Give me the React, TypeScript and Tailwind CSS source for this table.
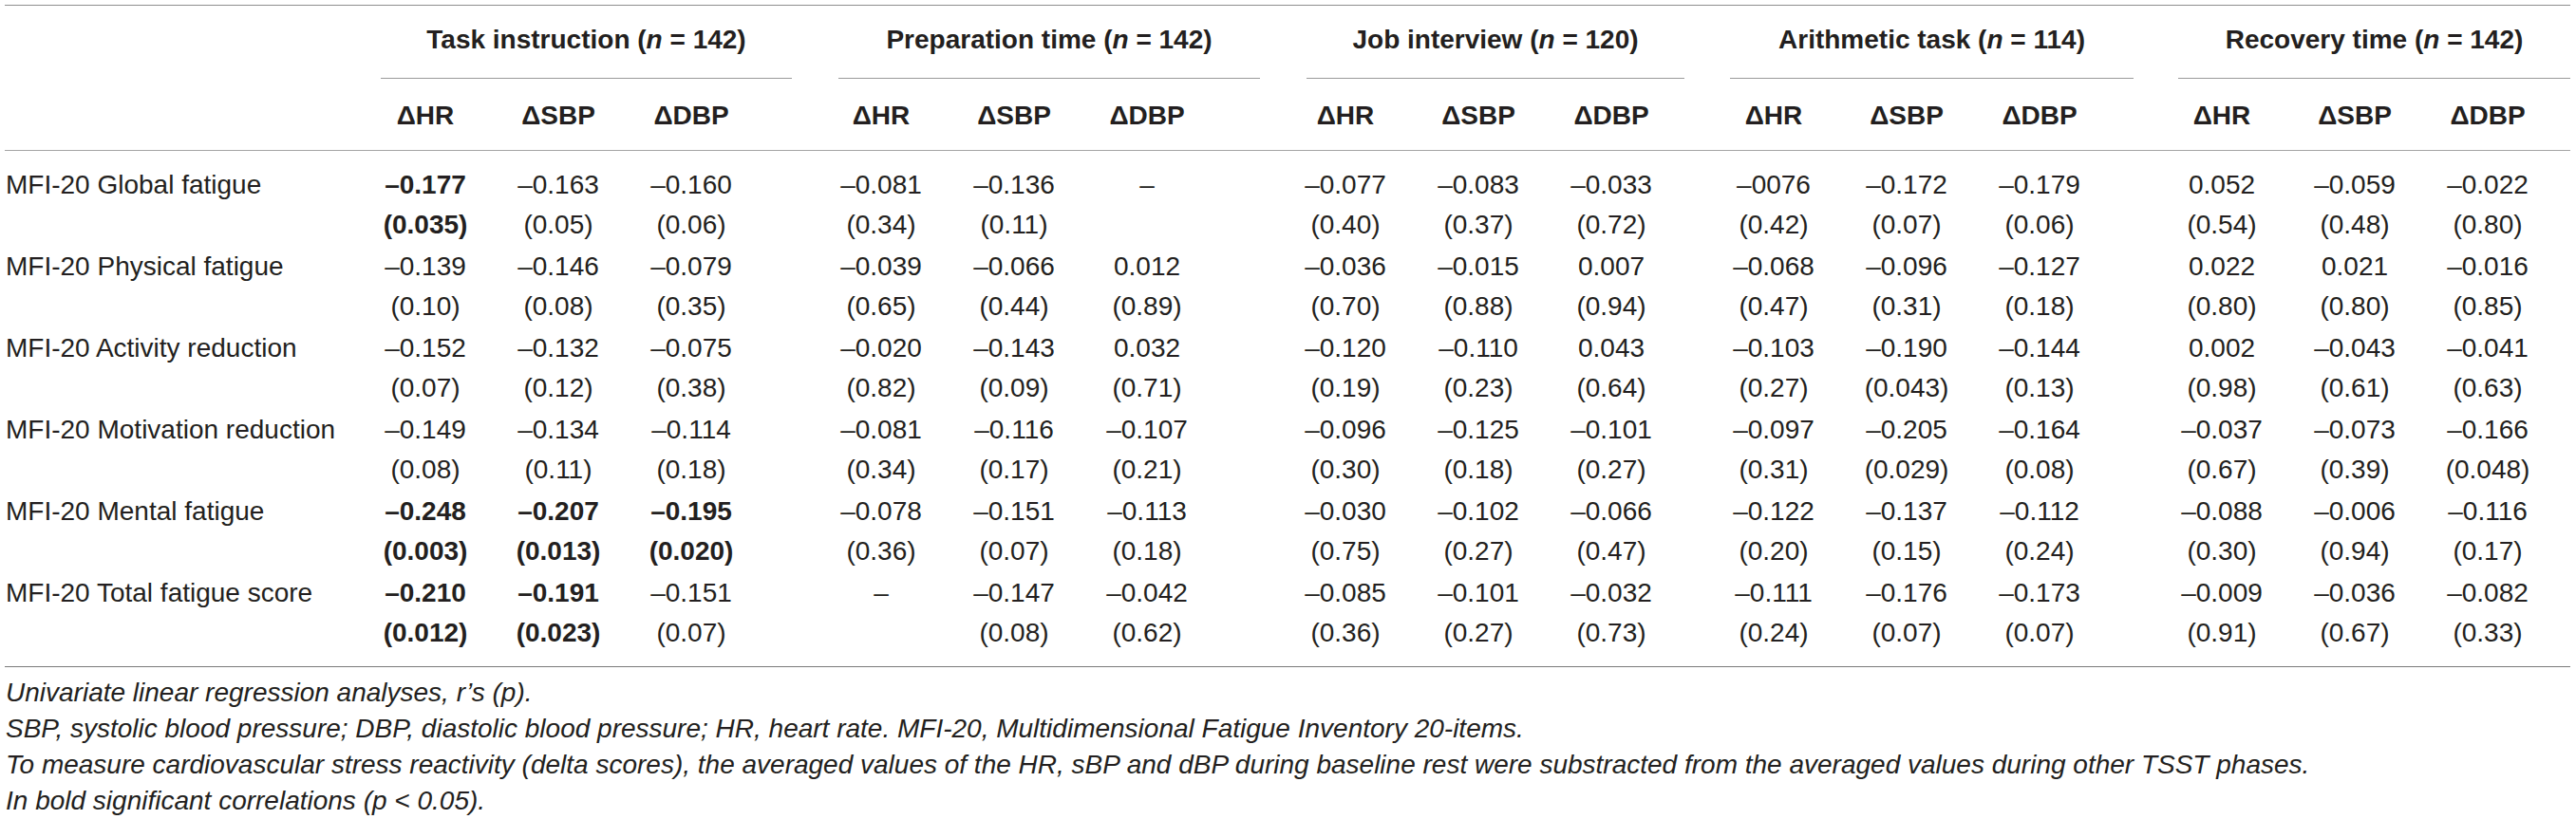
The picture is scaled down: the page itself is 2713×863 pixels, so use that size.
type Cell = { r: string; p?: string; b?: boolean };

const groups = [
  { title: "Task instruction", n: "142", line: "ml-[23px] mr-[24px]", gap: "w-[60px]" },
  { title: "Preparation time", n: "142", line: "ml-[25px] mr-[20px]", gap: "w-[69px]" },
  { title: "Job interview", n: "120", line: "ml-[29px] mr-[24px]", gap: "w-[31px]" },
  { title: "Arithmetic task", n: "114", line: "ml-[24px] mr-[23px]", gap: "w-[52px]" },
  { title: "Recovery time", n: "142", line: "ml-[24px] mr-0", gap: "w-[17px]" },
];

const subs = ["ΔHR", "ΔSBP", "ΔDBP"];

const c = (r: string, p?: string, b?: boolean): Cell => ({ r, p, b });

const rows: { label: string; cells: Cell[] }[] = [
  {
    label: "MFI-20 Global fatigue",
    cells: [
      c("–0.177", "(0.035)", true), c("–0.163", "(0.05)"), c("–0.160", "(0.06)"),
      c("–0.081", "(0.34)"), c("–0.136", "(0.11)"), c("–"),
      c("–0.077", "(0.40)"), c("–0.083", "(0.37)"), c("–0.033", "(0.72)"),
      c("–0076", "(0.42)"), c("–0.172", "(0.07)"), c("–0.179", "(0.06)"),
      c("0.052", "(0.54)"), c("–0.059", "(0.48)"), c("–0.022", "(0.80)"),
    ],
  },
  {
    label: "MFI-20 Physical fatigue",
    cells: [
      c("–0.139", "(0.10)"), c("–0.146", "(0.08)"), c("–0.079", "(0.35)"),
      c("–0.039", "(0.65)"), c("–0.066", "(0.44)"), c("0.012", "(0.89)"),
      c("–0.036", "(0.70)"), c("–0.015", "(0.88)"), c("0.007", "(0.94)"),
      c("–0.068", "(0.47)"), c("–0.096", "(0.31)"), c("–0.127", "(0.18)"),
      c("0.022", "(0.80)"), c("0.021", "(0.80)"), c("–0.016", "(0.85)"),
    ],
  },
  {
    label: "MFI-20 Activity reduction",
    cells: [
      c("–0.152", "(0.07)"), c("–0.132", "(0.12)"), c("–0.075", "(0.38)"),
      c("–0.020", "(0.82)"), c("–0.143", "(0.09)"), c("0.032", "(0.71)"),
      c("–0.120", "(0.19)"), c("–0.110", "(0.23)"), c("0.043", "(0.64)"),
      c("–0.103", "(0.27)"), c("–0.190", "(0.043)"), c("–0.144", "(0.13)"),
      c("0.002", "(0.98)"), c("–0.043", "(0.61)"), c("–0.041", "(0.63)"),
    ],
  },
  {
    label: "MFI-20 Motivation reduction",
    cells: [
      c("–0.149", "(0.08)"), c("–0.134", "(0.11)"), c("–0.114", "(0.18)"),
      c("–0.081", "(0.34)"), c("–0.116", "(0.17)"), c("–0.107", "(0.21)"),
      c("–0.096", "(0.30)"), c("–0.125", "(0.18)"), c("–0.101", "(0.27)"),
      c("–0.097", "(0.31)"), c("–0.205", "(0.029)"), c("–0.164", "(0.08)"),
      c("–0.037", "(0.67)"), c("–0.073", "(0.39)"), c("–0.166", "(0.048)"),
    ],
  },
  {
    label: "MFI-20 Mental fatigue",
    cells: [
      c("–0.248", "(0.003)", true), c("–0.207", "(0.013)", true), c("–0.195", "(0.020)", true),
      c("–0.078", "(0.36)"), c("–0.151", "(0.07)"), c("–0.113", "(0.18)"),
      c("–0.030", "(0.75)"), c("–0.102", "(0.27)"), c("–0.066", "(0.47)"),
      c("–0.122", "(0.20)"), c("–0.137", "(0.15)"), c("–0.112", "(0.24)"),
      c("–0.088", "(0.30)"), c("–0.006", "(0.94)"), c("–0.116", "(0.17)"),
    ],
  },
  {
    label: "MFI-20 Total fatigue score",
    cells: [
      c("–0.210", "(0.012)", true), c("–0.191", "(0.023)", true), c("–0.151", "(0.07)"),
      c("–"), c("–0.147", "(0.08)"), c("–0.042", "(0.62)"),
      c("–0.085", "(0.36)"), c("–0.101", "(0.27)"), c("–0.032", "(0.73)"),
      c("–0.111", "(0.24)"), c("–0.176", "(0.07)"), c("–0.173", "(0.07)"),
      c("–0.009", "(0.91)"), c("–0.036", "(0.67)"), c("–0.082", "(0.33)"),
    ],
  },
];

export default function App() {
  return (
    <div className="min-h-screen bg-white pl-[5px] pt-[5px] font-['Liberation_Sans',Arial,sans-serif] text-[28px] text-[#231f20]">
      <table className="table-fixed w-[2702px] border-separate border-spacing-0">
        <colgroup>
          <col className="w-[373px]" />
          {groups.map((g) => [
            <col key={g.title + "a"} className="w-[140px]" />,
            <col key={g.title + "b"} className="w-[140px]" />,
            <col key={g.title + "c"} className="w-[140px]" />,
            <col key={g.title + "d"} className={g.gap} />,
          ])}
        </colgroup>
        <thead>
          <tr>
            <th className="border-t border-[#8e8e8e] pt-[15px]" />
            {groups.map((g) => (
              <th key={g.title} colSpan={4} className="border-t border-[#8e8e8e] pt-[15px] p-0 font-bold">
                <div className={`${g.line} border-b border-[#9a9a9a] pb-[19px] text-center leading-[42px] whitespace-nowrap`}>
                  {g.title} (<i>n</i> = {g.n})
                </div>
              </th>
            ))}
          </tr>
          <tr>
            <th className="border-b border-[#a5a5a5] pt-[18px] pb-[15px]" />
            {groups.map((g) => [
              ...subs.map((s) => (
                <th
                  key={g.title + s}
                  className="border-b border-[#a5a5a5] pt-[18px] pb-[15px] text-center font-bold leading-[42px]"
                >
                  {s}
                </th>
              )),
              <th key={g.title + "gap"} className="border-b border-[#a5a5a5]" />,
            ])}
          </tr>
        </thead>
        <tbody>
          {rows.map((row, ri) => {
            const first = ri === 0;
            const last = ri === rows.length - 1;
            const pad = `${first ? "pt-[15px]" : "pt-[1px]"} ${last ? "pb-[14px] border-b border-[#7a7a7a]" : "pb-[1px]"}`;
            return (
              <tr key={row.label}>
                <td className={`${pad} pl-px align-top leading-[42px] whitespace-nowrap`}>{row.label}</td>
                {groups.map((g, gi) => [
                  ...row.cells.slice(gi * 3, gi * 3 + 3).map((cell, ci) => (
                    <td
                      key={g.title + ci}
                      className={`${pad} align-top text-center leading-[42px] ${cell.b ? "font-bold" : ""}`}
                    >
                      <div>{cell.r}</div>
                      {cell.p && <div>{cell.p}</div>}
                    </td>
                  )),
                  <td key={g.title + "gap"} className={pad} />,
                ])}
              </tr>
            );
          })}
        </tbody>
      </table>
      <div className="mt-[8px] pl-px italic leading-[38px]">
        <p>
          Univariate linear regression analyses, r’s (p).
        </p>
        <p>
          SBP, systolic blood pressure; DBP, diastolic blood pressure; HR, heart rate. MFI-20, Multidimensional
          Fatigue Inventory 20-items.
        </p>
        <p>
          To measure cardiovascular stress reactivity (delta scores), the averaged values of the HR, sBP and dBP
          during baseline rest were substracted from the averaged values during other TSST phases.
        </p>
        <p>In bold significant correlations (p &lt; 0.05).</p>
      </div>
    </div>
  );
}
